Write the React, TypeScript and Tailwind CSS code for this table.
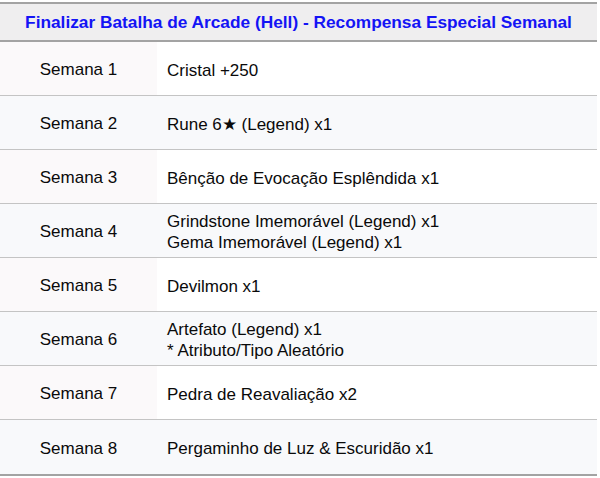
import React from "react";

const rows: string[][] = [
  ["Cristal +250"],
  ["Rune 6★ (Legend) x1"],
  ["Bênção de Evocação Esplêndida x1"],
  ["Grindstone Imemorável (Legend) x1", "Gema Imemorável (Legend) x1"],
  ["Devilmon x1"],
  ["Artefato (Legend) x1", "* Atributo/Tipo Aleatório"],
  ["Pedra de Reavaliação x2"],
  ["Pergaminho de Luz & Escuridão x1"],
];

export default function App() {
  return (
    <div className="w-[600px] h-[478px] bg-white pt-[2px]" style={{ fontFamily: '"Liberation Sans", Arial, sans-serif' }}>
      <div className="w-[597px] border-t-2 border-b-2 border-[#a3a3a3]">
        <div className="h-[38px] pt-[2px] bg-[#efeeef] border-b-2 border-[#a3a3a3] flex items-center justify-center text-[17.3px] font-bold text-[#1414f5]">
          Finalizar Batalha de Arcade (Hell) - Recompensa Especial Semanal
        </div>
        {rows.map((lines, i) => {
          const even = i % 2 === 1;
          const last = i === rows.length - 1;
          return (
            <div
              key={i}
              className={`flex h-[54px] pt-[3px] text-[17px] text-[#0a0a0a] ${last ? "" : "border-b border-[#c4c4c4]"} ${even ? "bg-[#f8f9fb]" : "bg-white"}`}
            >
              <div className={`w-[157px] -mt-[3px] pt-[3px] flex items-center justify-center ${even ? "" : "bg-[#fbf9fa]"}`}>
                Semana {i + 1}
              </div>
              <div className="flex-1 flex flex-col justify-center pl-[10px] leading-[21px]">
                {lines.map((l, j) => (
                  <div key={j}>{l}</div>
                ))}
              </div>
            </div>
          );
        })}
      </div>
    </div>
  );
}
